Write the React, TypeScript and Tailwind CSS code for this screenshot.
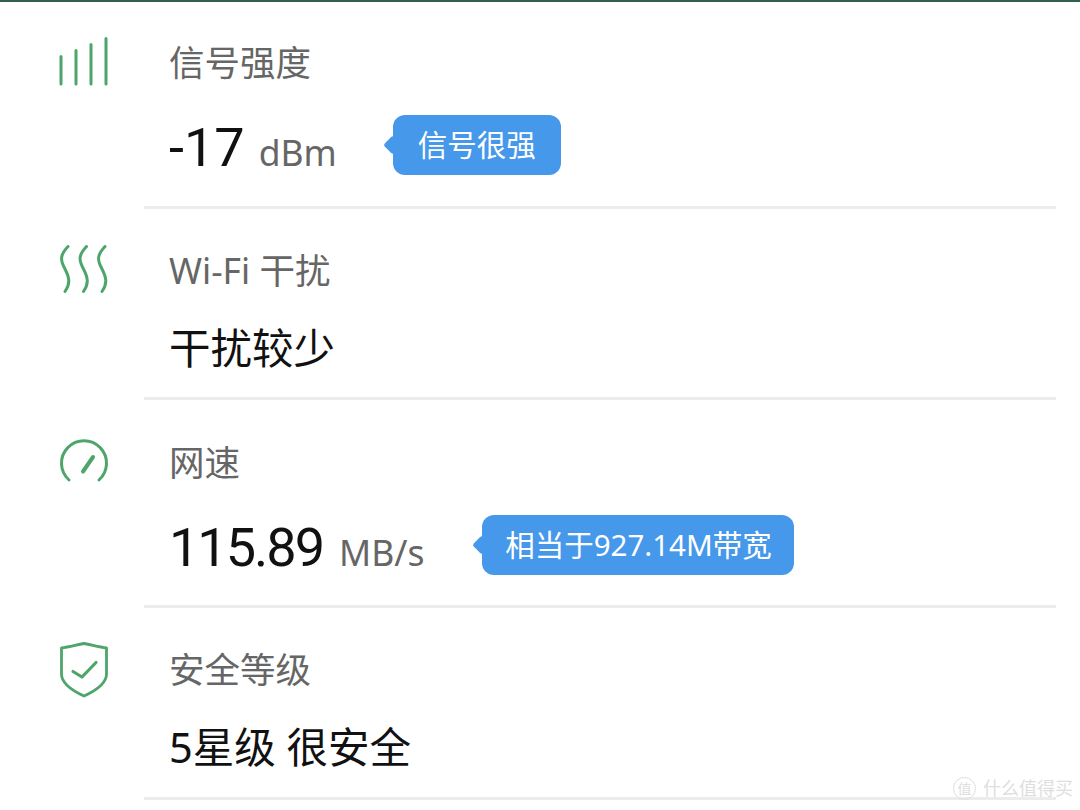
const FONT = "font-['Noto_Sans','Noto_Sans_CJK_SC',sans-serif]";

function SignalIcon() {
    return (
        <svg width="50" height="50" viewBox="0 0 50 50" fill="none" stroke="#4ea56a" strokeWidth="3" strokeLinecap="round">
            <path d="M2 19.500V47" />
            <path d="M17 13.500V47" />
            <path d="M32 7.500V47" />
            <path d="M47 1.500V47" />
        </svg>
    );
}

function WavesIcon() {
    return (
        <svg width="50" height="50" viewBox="0 0 50 50" fill="none" stroke="#4ea56a" strokeWidth="3" strokeLinecap="round">
            <path d="M9 1.500C1 10 1 15 6 24C10 32 12 38 6 46.500" />
            <path d="M27.500 1.500C19.500 10 19.500 15 24.500 24C28.500 32 30.500 38 24.500 46.500" />
            <path d="M46 1.500C38 10 38 15 43 24C47 32 49 38 43 46.500" />
        </svg>
    );
}

function GaugeIcon() {
    return (
        <svg width="50" height="46" viewBox="0 0 50 46" fill="none" stroke="#4ea56a" strokeWidth="3" strokeLinecap="round">
            <path d="M10 42A22.500 22.500 0 1 1 40 42" />
            <path d="M24 33.500L34 19" strokeWidth="4" />
        </svg>
    );
}

function ShieldIcon() {
    return (
        <svg width="50" height="56" viewBox="0 0 50 56" fill="none" stroke="#4ea56a" strokeWidth="2.800" strokeLinejoin="round" strokeLinecap="round">
            <path d="M2.500 6C10 5 17 3 25 1.500C33 3 40 5 47.500 6V32C47.500 42 36 49 25 54C14 49 2.500 42 2.500 32Z" />
            <path d="M14 29.500L23 35L37 20.500" strokeWidth="3.200" />
        </svg>
    );
}

function Bubble({ text, className }: { text: string; className: string }) {
    return (
        <div className={`relative flex h-[60px] items-center justify-center rounded-[12px] bg-[#4698ea] text-[29.500px] text-white ${className}`}>
            <span className="absolute left-[-7px] top-[23px] h-[14px] w-[14px] rotate-45 rounded-[3px] bg-[#4698ea]" />
            <span className="relative">{text}</span>
        </div>
    );
}

const ROWS = [
    { icon: <SignalIcon />, iconTop: "pt-[35px]", label: "信号强度", height: "h-[207px]", labelTop: "pt-[36px]", valueGap: "mt-[29px]", number: "-17", spacing: "tracking-[0px]", unitGap: "gap-[14px]", unit: "dBm", bubble: "信号很强", bubbleGap: "ml-[56px]", bubbleW: "w-[168px]" },
    { icon: <WavesIcon />, iconTop: "pt-[36px]", label: "Wi-Fi 干扰", height: "h-[191px]", labelTop: "pt-[37px]", valueGap: "mt-[24px]", text: "干扰较少" },
    { icon: <GaugeIcon />, iconTop: "pt-[38px]", label: "网速", height: "h-[208px]", labelTop: "pt-[38px]", valueGap: "mt-[29px]", number: "115.89", spacing: "tracking-[-2px]", unitGap: "gap-[16px]", unit: "MB/s", bubble: "相当于927.14M带宽", bubbleGap: "ml-[58px]", bubbleW: "w-[312px]" },
    { icon: <ShieldIcon />, iconTop: "pt-[34px]", label: "安全等级", height: "h-[192px]", labelTop: "pt-[37px]", valueGap: "mt-[24px]", text: "5星级 很安全" },
];

export default function App() {
    return (
        <div className={`relative h-[810px] w-[1080px] overflow-hidden bg-white ${FONT}`}>
            <div className="h-[2px] bg-[#2f5f4f]" />
            {ROWS.map((row) => (
                <div key={row.label} className={`flex ${row.height}`}>
                    <div className={`w-[144px] shrink-0 pl-[59px] ${row.iconTop}`}>{row.icon}</div>
                    <div className={`mr-[24px] flex-1 border-b-[3px] border-[#ececec] pl-[25px] ${row.labelTop}`}>
                        <div className="text-[35.500px] leading-[48px] text-[#666666]">{row.label}</div>
                        <div className={`flex h-[60px] items-center ${row.valueGap}`}>
                            {row.text && <span className="text-[41.500px] leading-[60px] text-[#111111]">{row.text}</span>}
                            {row.number && (
                                <div className={`flex items-baseline pt-[6px] ${row.unitGap}`}>
                                    <span className={`font-['Roboto',sans-serif] text-[54px] leading-[60px] text-[#111111] ${row.spacing}`}>{row.number}</span>
                                    <span className="text-[35.500px] leading-[48px] text-[#666666]">{row.unit}</span>
                                </div>
                            )}
                            {row.bubble && <Bubble text={row.bubble} className={`${row.bubbleGap} ${row.bubbleW}`} />}
                        </div>
                    </div>
                </div>
            ))}
            <div className="absolute left-[953px] top-[777px] flex items-center gap-[7px] text-[#dedede]">
                <span className="flex h-[23px] w-[23px] items-center justify-center rounded-full border border-[#dedede] text-[14px]">值</span>
                <span className="text-[18px] leading-[23px]">什么值得买</span>
            </div>
        </div>
    );
}
